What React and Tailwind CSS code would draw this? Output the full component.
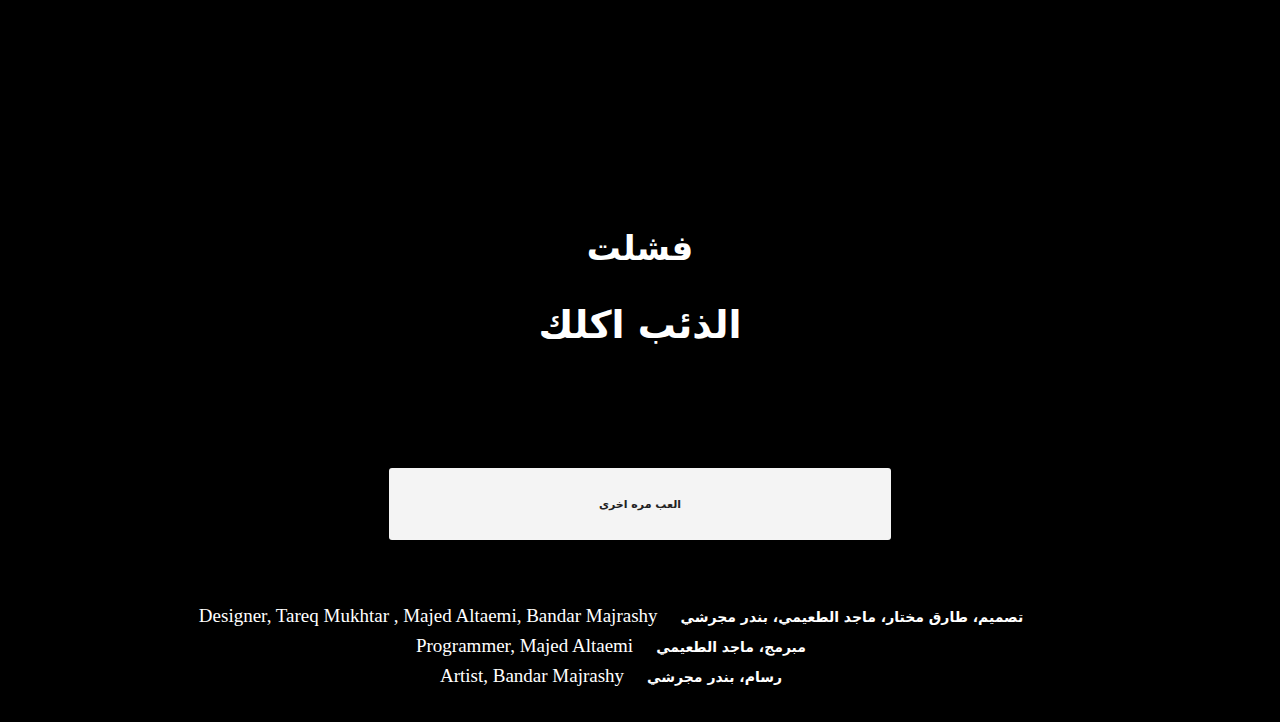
import React from "react";

const credits = [
  {
    en: "Designer, Tareq Mukhtar , Majed Altaemi, Bandar Majrashy",
    ar: "تصميم، طارق مختار، ماجد الطعيمي، بندر مجرشي",
  },
  { en: "Programmer, Majed Altaemi", ar: "مبرمج، ماجد الطعيمي" },
  { en: "Artist, Bandar Majrashy", ar: "رسام، بندر مجرشي" },
];

const arabic = { fontFamily: '"DejaVu Sans", "Noto Sans", sans-serif' };

const App = () => {
  const playAgain = () => {
    window.location.reload();
  };

  return (
    <div className="w-full h-[722px] bg-black text-white flex flex-col items-center overflow-hidden">
      {/* result */}
      <div dir="rtl" className="mt-[226px] flex flex-col items-center font-bold" style={arabic}>
        <h1 className="text-[34px] leading-[44px]">فشلت</h1>
        <h2 className="mt-[30px] text-[38px] leading-[50px]">الذئب اكلك</h2>
      </div>

      <button
        type="button"
        onClick={playAgain}
        dir="rtl"
        className="mt-[118px] w-[502px] h-[72px] bg-[#f4f4f4] rounded-[3px] text-[#222] text-[11px] font-bold pt-[3px]"
        style={arabic}
      >
        العب مره اخرى
      </button>

      {/* credits */}
      <div className="mt-[64px] flex flex-col items-center gap-[6px] pr-[58px]">
        {credits.map((c, i) => (
          <div key={i} className="flex items-center gap-[23px] leading-[22px]">
            <span className="text-[19px]" style={{ fontFamily: '"Liberation Serif", serif' }}>
              {c.en}
            </span>
            <span dir="rtl" className="text-[14px] font-bold pt-[2px]" style={arabic}>
              {c.ar}
            </span>
          </div>
        ))}
      </div>
    </div>
  );
};

export default App;
